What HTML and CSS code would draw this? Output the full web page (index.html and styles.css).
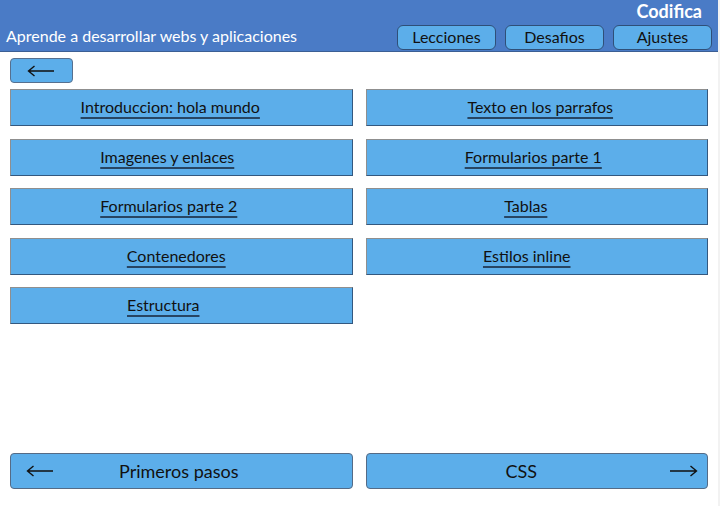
FILE: index.html
```html
<!DOCTYPE html>
<html lang="es">
<head>
<meta charset="utf-8">
<title>Codifica</title>
<link rel="stylesheet" href="styles.css">
</head>
<body>
<div class="page">
  <header class="header">
    <div class="brand-row"><span class="brand">Codifica</span></div>
    <div class="nav-row">
      <span class="subtitle">Aprende a desarrollar webs y aplicaciones</span>
      <nav class="tabs">
        <button class="tab">Lecciones</button>
        <button class="tab">Desafios</button>
        <button class="tab">Ajustes</button>
      </nav>
    </div>
  </header>
  <main class="main">
    <button class="back" aria-label="Volver">
      <svg width="28" height="12" viewBox="0 0 28 12"><path d="M1.5 6 H27 M7.5 1 L1.5 6 L7.5 11" fill="none" stroke="#111" stroke-width="1.4"/></svg>
    </button>
    <div class="lessons">
      <a class="lesson l-22" href="#"><span>Introduccion: hola mundo</span></a>
      <a class="lesson r-7" href="#"><span>Texto en los parrafos</span></a>
      <a class="lesson l-28" href="#"><span>Imagenes y enlaces</span></a>
      <a class="lesson l-7" href="#"><span>Formularios parte 1</span></a>
      <a class="lesson l-25" href="#"><span>Formularios parte 2</span></a>
      <a class="lesson l-22" href="#"><span>Tablas</span></a>
      <a class="lesson l-10" href="#"><span>Contenedores</span></a>
      <a class="lesson l-20" href="#"><span>Estilos inline</span></a>
      <a class="lesson l-36" href="#"><span>Estructura</span></a>
    </div>
    <div class="pager">
      <a class="pager-btn prev" href="#">
        <svg class="arrow" width="28" height="12" viewBox="0 0 28 12"><path d="M1.5 6 H27 M7.5 1 L1.5 6 L7.5 11" fill="none" stroke="#111" stroke-width="1.4"/></svg>
        <span class="pager-label">Primeros pasos</span>
      </a>
      <a class="pager-btn next" href="#">
        <span class="pager-label">CSS</span>
        <svg class="arrow" width="28" height="12" viewBox="0 0 28 12"><path d="M0 6 H26.5 M20.5 1 L26.5 6 L20.5 11" fill="none" stroke="#111" stroke-width="1.4"/></svg>
      </a>
    </div>
  </main>
</div>
</body>
</html>
```

FILE: styles.css
```css
* { box-sizing: border-box; }
html, body { margin: 0; padding: 0; }
body {
  background: #f2f2f2;
  font-family: Lato, "Open Sans", sans-serif;
  color: #111;
}
.page {
  width: 718px;
  height: 506px;
  background: #fff;
  display: flex;
  flex-direction: column;
}
.header {
  background: #4a7bc6;
  border-bottom: 1px solid #3c5f94;
  height: 52px;
  flex: none;
}
.brand-row {
  height: 22px;
  display: flex;
  justify-content: flex-end;
  padding-right: 16px;
}
.brand {
  color: #fff;
  font-weight: 700;
  font-size: 18px;
  line-height: 22px;
}
.nav-row {
  margin-top: 3px;
  display: flex;
  justify-content: space-between;
  align-items: flex-start;
  padding: 0 6px;
  height: 25px;
}
.subtitle {
  color: #fff;
  font-size: 16px;
  line-height: 22px;
}
.tabs {
  display: flex;
  gap: 9px;
}
.tab {
  width: 99px;
  height: 25px;
  background: #5caeea;
  border: 1px solid #2f4f78;
  border-radius: 6px;
  font-family: Lato, sans-serif;
  font-size: 16px;
  color: #111;
  padding: 0 0 2px;
  line-height: 20px;
}
.main {
  flex: 1;
  display: flex;
  flex-direction: column;
  padding: 6px 10px 17px;
}
.back {
  width: 63px;
  height: 25px;
  background: #5caeea;
  border: 1px solid #56708f;
  border-radius: 4px;
  padding: 0 1px 0 0;
  display: flex;
  align-items: center;
  justify-content: center;
}
.lessons {
  margin-top: 6px;
  display: grid;
  grid-template-columns: 1fr 1fr;
  column-gap: 13px;
  row-gap: 12.5px;
  grid-auto-rows: 37px;
}
.lesson {
  background: #5caeea;
  border: 1px solid;
  border-color: #8f8f8f #33587f #33587f #8f8f8f;
  display: flex;
  align-items: center;
  justify-content: center;
  color: #111;
  font-size: 16px;
  line-height: 20px;
  padding-bottom: 1px;
  text-decoration: underline;
  text-decoration-color: #274563;
  text-underline-offset: 4px;
  text-decoration-thickness: 1.5px;
}
.lesson.l-7 { padding-right: 7px; }
.lesson.l-10 { padding-right: 10px; }
.lesson.l-20 { padding-right: 20px; }
.lesson.l-22 { padding-right: 22px; }
.lesson.l-25 { padding-right: 25px; }
.lesson.l-28 { padding-right: 28px; }
.lesson.l-36 { padding-right: 36px; }
.lesson.r-7 { padding-left: 7px; }
.pager {
  margin-top: auto;
  display: grid;
  grid-template-columns: 1fr 1fr;
  column-gap: 13px;
}
.pager-btn {
  height: 36px;
  background: #5caeea;
  border: 1px solid #556b86;
  border-radius: 4px;
  display: flex;
  align-items: center;
  color: #111;
  text-decoration: none;
  font-size: 18px;
}
.pager-btn.prev { padding: 0 48px 0 15px; }
.pager-btn.next { padding: 0 9px 0 6px; }
.pager-label {
  flex: 1;
  text-align: center;
}
.arrow { flex: none; }
```
